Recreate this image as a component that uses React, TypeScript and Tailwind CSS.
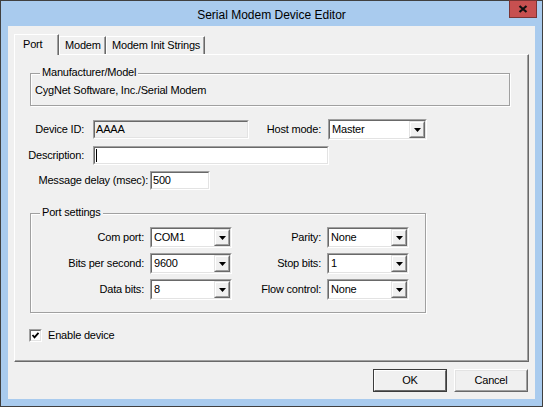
import React from 'react';

const sunkenOuter = 'border border-t-[#a0a0a0] border-l-[#a0a0a0] border-r-white border-b-white';
const sunkenInner = 'border border-t-[#696969] border-l-[#696969] border-r-[#e3e3e3] border-b-[#e3e3e3]';

const DownArrow = () => (
  <svg width="7" height="4" viewBox="0 0 7 4">
    <polygon points="0,0 7,0 3.5,4" fill="#000" />
  </svg>
);

const Edit: React.FC<{ className: string; disabled?: boolean; children?: React.ReactNode }> = ({
  className,
  disabled = false,
  children
}) => (
  <div className={`h-[19px] ${sunkenOuter} ${className}`}>
    <div className={`h-full flex items-center pl-[1px] ${sunkenInner} ${disabled ? 'bg-[#f0f0f0]' : 'bg-white'}`}>
      {children}
    </div>
  </div>
);

const Combo: React.FC<{ value: string; className: string }> = ({ value, className }) => (
  <div className={`h-[21px] ${sunkenOuter} ${className}`}>
    <div className={`h-full flex bg-white ${sunkenInner}`}>
      <span className="flex-1 pl-[2px] leading-[17px]">{value}</span>
      <div className="w-[16px] h-full border border-t-[#e3e3e3] border-l-[#e3e3e3] border-r-[#696969] border-b-[#696969]">
        <div className="h-full flex items-center justify-center bg-[#f0f0f0] border border-t-white border-l-white border-r-[#a0a0a0] border-b-[#a0a0a0]">
          <DownArrow />
        </div>
      </div>
    </div>
  </div>
);

const Group: React.FC<{ title: string; className: string; children?: React.ReactNode }> = ({
  title,
  className,
  children
}) => (
  <div className={`relative border border-[#a0a0a0] shadow-[1px_1px_0_#fff,inset_1px_1px_0_#fff] ${className}`}>
    <span className="absolute -top-[8px] left-[9px] px-[2px] bg-[#f0f0f0] leading-[13px]">{title}</span>
    {children}
  </div>
);

const PortRow: React.FC<{ label: string; value: string; label2: string; value2: string }> = ({
  label,
  value,
  label2,
  value2
}) => (
  <div className="flex items-center h-[21px]">
    <span className="w-[113px] text-right">{label}</span>
    <Combo value={value} className="ml-[6px] w-[82px]" />
    <span className="w-[89px] text-right">{label2}</span>
    <Combo value={value2} className="ml-[6px] w-[82px]" />
  </div>
);

const Tab: React.FC<{ label: string; selected?: boolean; className: string }> = ({ label, selected = false, className }) => (
  <div
    className={`border-l border-t border-l-white border-t-white border-r border-r-[#696969] shadow-[inset_-1px_0_0_#a0a0a0] bg-[#f0f0f0] leading-[13px] whitespace-nowrap ${
      selected ? 'relative z-10 h-[21px] -mb-px pl-[8px] pt-[3px]' : 'h-[18px] pl-[5px] pt-[2px]'
    } ${className}`}
  >
    {label}
  </div>
);

const DialogButton: React.FC<{ label: string; isDefault?: boolean }> = ({ label, isDefault = false }) => (
  <div className={`w-[74px] h-[23px] border ${isDefault ? 'border-[#3c3c3c]' : 'border-t-white border-l-white border-r-[#696969] border-b-[#696969]'}`}>
    <div
      className={`h-full flex items-center justify-center bg-[#f0f0f0] border ${
        isDefault ? 'border-t-white border-l-white border-r-[#696969] border-b-[#696969]' : 'border-t-[#e3e3e3] border-l-[#e3e3e3] border-r-[#a0a0a0] border-b-[#a0a0a0]'
      }`}
    >
      {label}
    </div>
  </div>
);

export default function App() {
  return (
    <div className="relative w-[543px] h-[407px] border border-[#404040] bg-[#a9cbee] font-['Liberation_Sans',Arial,sans-serif] text-[11px] tracking-[-0.2px] text-black">
      {/* title bar */}
      <div className="h-[25px] flex items-center justify-center pt-[2px] text-[12px] tracking-normal">Serial Modem Device Editor</div>
      <div className="absolute -top-px right-[5px] w-[28px] h-[18px] bg-[#c75050] border border-[#7a3434] flex items-center justify-center">
        <svg width="10" height="8" viewBox="0 0 10 8">
          <path d="M1.5 1 L8.5 7 M8.5 1 L1.5 7" stroke="#111" strokeWidth="2.2" />
        </svg>
      </div>

      {/* client area */}
      <div className="mx-[7px] h-[373px] bg-[#f0f0f0] pt-[8px]">
        <div className="flex items-end h-[20px] ml-[6px]">
          <Tab label="Port" selected className="w-[45px]" />
          <Tab label="Modem" className="w-[47px]" />
          <Tab label="Modem Init Strings" className="w-[99px]" />
        </div>

        <div className="ml-[6px] w-[515px] h-[308px] border border-t-white border-l-white border-r-[#696969] border-b-[#696969] shadow-[inset_-1px_-1px_0_#a0a0a0]">
          <Group title="Manufacturer/Model" className="ml-[15px] mt-[18px] w-[480px] h-[33px]">
            <div className="pl-[4px] pt-[10px] leading-[13px]">CygNet Software, Inc./Serial Modem</div>
          </Group>

          <div className="flex items-center h-[21px] mt-[13px]">
            <span className="w-[69px] text-right">Device ID:</span>
            <Edit disabled className="ml-[9px] w-[156px]">
              <span>AAAA</span>
            </Edit>
            <span className="w-[72px] text-right">Host mode:</span>
            <Combo value="Master" className="ml-[7px] w-[99px]" />
          </div>

          <div className="flex items-center h-[19px] mt-[6px]">
            <span className="w-[69px] text-right">Description:</span>
            <Edit className="ml-[9px] w-[236px]">
              <span className="w-px h-[13px] bg-black" />
            </Edit>
          </div>

          <div className="flex items-center h-[19px] mt-[6px]">
            <span className="w-[133px] text-right">Message delay (msec):</span>
            <Edit className="ml-[2px] w-[60px]">
              <span>500</span>
            </Edit>
          </div>

          <Group title="Port settings" className="ml-[15px] mt-[23px] w-[396px] h-[100px]">
            <div className="mt-[13px] flex flex-col gap-[5px]">
              <PortRow label="Com port:" value="COM1" label2="Parity:" value2="None" />
              <PortRow label="Bits per second:" value="9600" label2="Stop bits:" value2="1" />
              <PortRow label="Data bits:" value="8" label2="Flow control:" value2="None" />
            </div>
          </Group>

          <div className="flex items-center mt-[16px] ml-[14px] h-[13px]">
            <div className={`w-[13px] h-[13px] ${sunkenOuter}`}>
              <div className={`h-full bg-white flex items-center justify-center ${sunkenInner}`}>
                <svg width="9" height="9" viewBox="0 0 9 9">
                  <polyline points="1.5,4 3.5,6.3 7.5,1.8" fill="none" stroke="#000" strokeWidth="1.8" />
                </svg>
              </div>
            </div>
            <span className="ml-[6px] leading-[13px]">Enable device</span>
          </div>
        </div>

        <div className="flex justify-end gap-[7px] mt-[7px] pr-[7px]">
          <DialogButton label="OK" isDefault />
          <DialogButton label="Cancel" />
        </div>
      </div>
    </div>
  );
}
